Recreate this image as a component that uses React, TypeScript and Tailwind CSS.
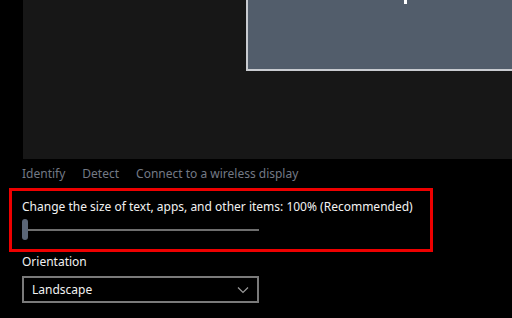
import React from "react";

export default function App() {
  return (
    <div
      className="w-[512px] h-[318px] bg-black overflow-hidden text-white"
      style={{ fontFamily: '"Noto Sans", "Open Sans", sans-serif' }}
    >
      {/* display arrangement canvas */}
      <div className="ml-[23px] h-[159px] bg-[#171717] relative overflow-hidden">
        <div className="absolute left-[223px] top-[-40px] w-[300px] h-[111px] border-2 border-[#c8cbd0] bg-[#525d6b]">
          <div className="absolute left-[156px] bottom-[65px] w-[3px] h-[6px] bg-white" />
        </div>
      </div>

      {/* links */}
      <div className="flex gap-[17px] pl-[22px] mt-[5px] text-[12px] leading-[19px] text-[#737985] whitespace-nowrap">
        <span>Identify</span>
        <span>Detect</span>
        <span>Connect to a wireless display</span>
      </div>

      {/* highlighted scale setting */}
      <div className="ml-[9px] mt-[5px] w-[424px] h-[64px] border-[3px] border-[#ee0000] pl-[10px] pt-[6px]">
        <div className="text-[12px] leading-[19px] text-[#f2f2f2] whitespace-nowrap">
          Change the size of text, apps, and other items: 100% (Recommended)
        </div>
        <div className="relative mt-[3px] w-[237px] h-[21px] flex items-center">
          <div className="w-[6px] h-[21px] rounded-full bg-[#5b6677]" />
          <div className="flex-1 h-[2px] bg-[#6e6e6e]" />
        </div>
      </div>

      {/* orientation */}
      <div className="pl-[22px] mt-0">
        <div className="text-[12px] leading-[19px] text-[#f2f2f2]">Orientation</div>
        <div className="mt-[5px] w-[237px] h-[27px] border-2 border-[#7a7a7a] flex items-center justify-between pl-[8px] pr-[8px]">
          <span className="text-[12px] leading-[19px] text-[#f2f2f2]">Landscape</span>
          <svg width="12" height="8" viewBox="0 0 12 8">
            <path d="M1 1.5 L6 6.5 L11 1.5" fill="none" stroke="#9a9a9a" strokeWidth="1.2" />
          </svg>
        </div>
      </div>
    </div>
  );
}
